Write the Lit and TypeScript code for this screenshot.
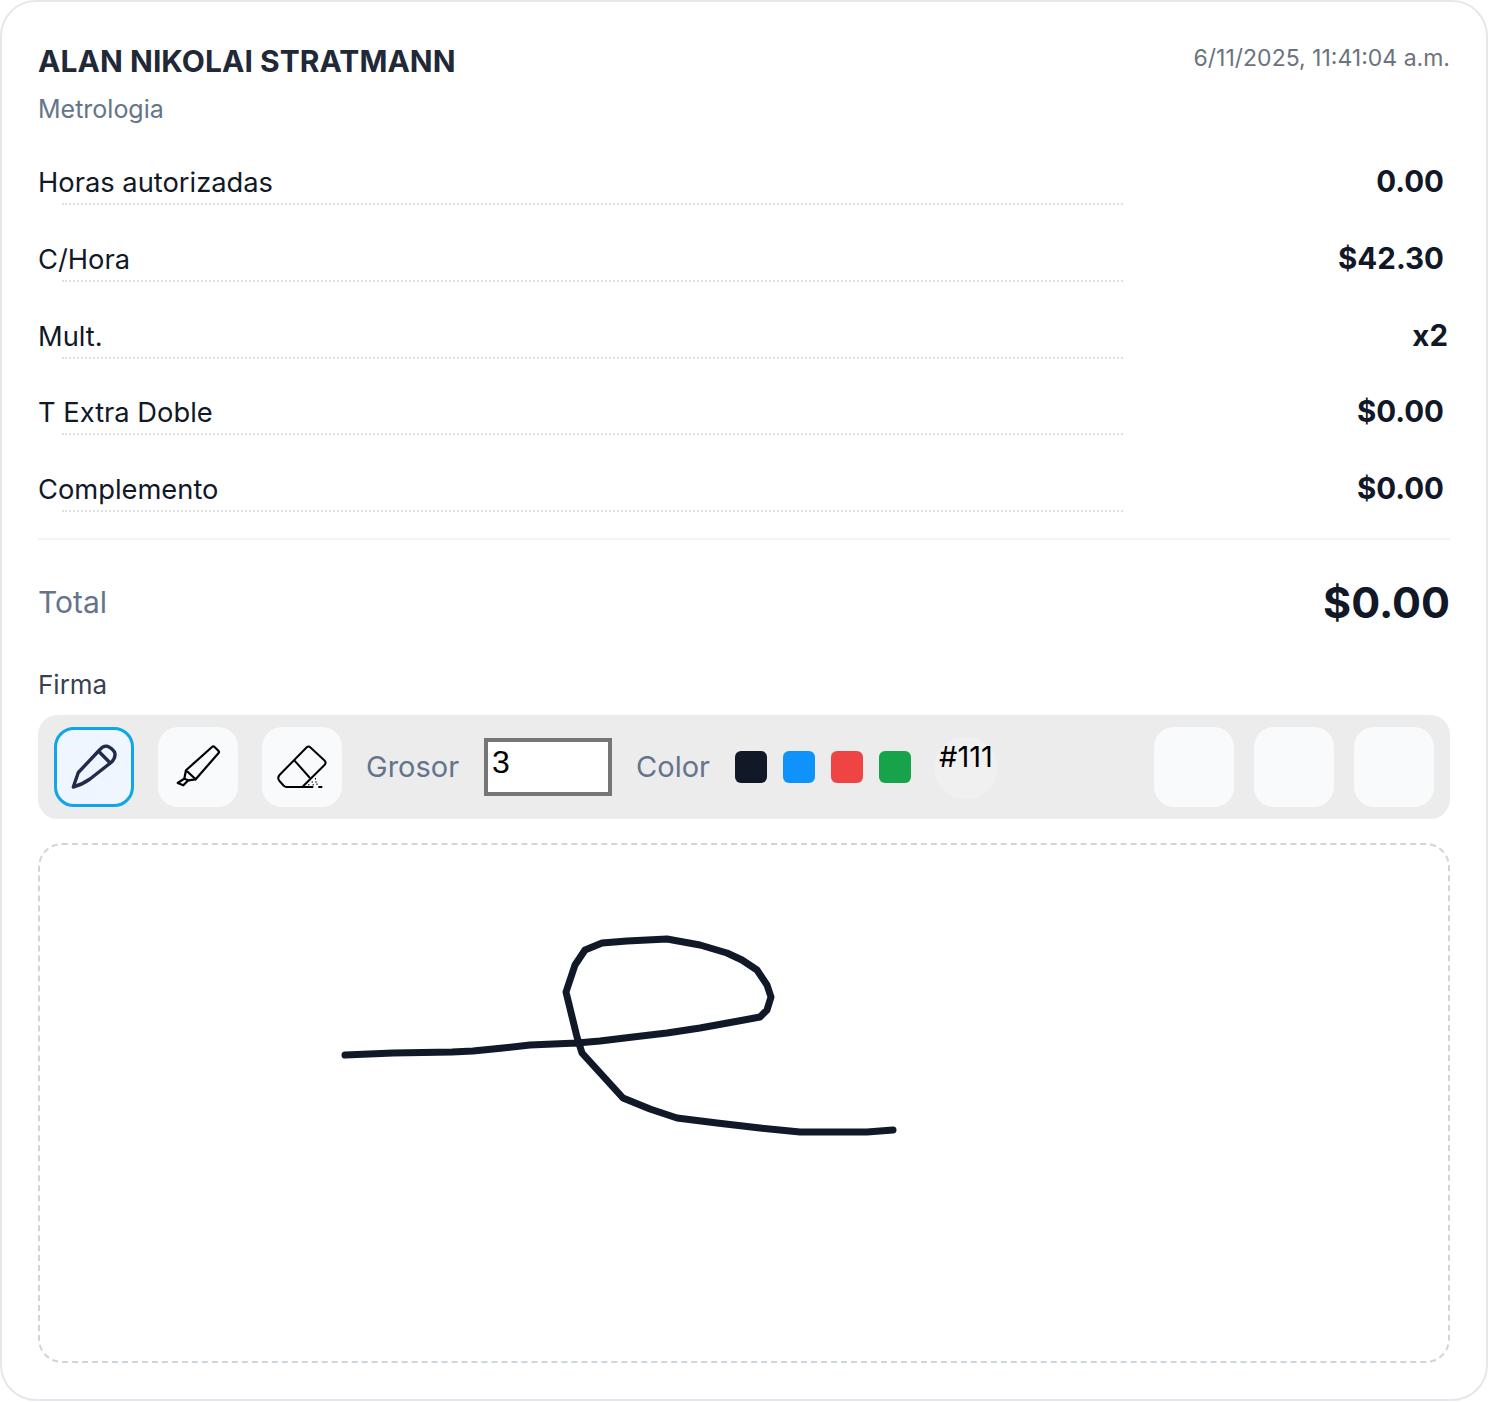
import { LitElement, html, css, svg } from "lit";
import { customElement } from "lit/decorators.js";

const rows = [
  { l: "Horas autorizadas", v: "0.00", c: "" },
  { l: "C/Hora", v: "$42.30", c: "" },
  { l: "Mult.", v: "x2", c: "wide" },
  { l: "T Extra Doble", v: "$0.00", c: "" },
  { l: "Complemento", v: "$0.00", c: "" },
];

const sig = "345,1055 393,1053 452,1052 473,1051 503,1048 530,1045 577,1043 600,1041 633,1037 667,1033 700,1028 733,1022 760,1017 767,1010 771,997 767,985 757,970 742,960 727,953 700,945 667,939 627,941 602,943 585,950 575,965 566,992 577,1037 582,1053 623,1098 650,1109 677,1118 717,1123 760,1128 800,1132 867,1132 893,1130";

@customElement("app-root")
export class AppRoot extends LitElement {
  static styles = css`
    :host { display: block; width: 1488px; height: 1402px; font-family: Inter, "Liberation Sans", sans-serif; }
    * { box-sizing: border-box; }
    .card { width: 1488px; height: 1401px; border: 2px solid #e5e7eb; border-radius: 36px; background: #fff; padding: 36px 36px 0; display: flex; flex-direction: column; }
    .head { display: flex; justify-content: space-between; align-items: flex-start; height: 116px; }
    .name { font-size: 30px; font-weight: 700; line-height: 46px; letter-spacing: 0.05px; color: #1f2937; }
    .dept { font-size: 25px; line-height: 36px; margin-top: 7px; color: #64748b; }
    .date { font-size: 23px; line-height: 40px; color: #6b7280; }
    .row { display: flex; justify-content: space-between; height: 76.8px; }
    .left { width: 1085px; padding-top: 11px; }
    .label { font-size: 27.3px; line-height: 35px; color: #111827; }
    .dots { margin: 3px 0 0 24px; border-bottom: 2px dotted #dcdfe4; }
    .val { font-size: 29.5px; font-weight: 700; line-height: 40px; padding-top: 7px; padding-right: 6px; color: #111827; }
    .val.wide { padding-right: 2px; }
    .sep { height: 2px; background: #f1f5f9; }
    .total { display: flex; justify-content: space-between; align-items: center; height: 124px; }
    .total-l { font-size: 30px; color: #64748b; }
    .total-v { font-size: 43px; font-weight: 700; color: #111827; }
    .firma { font-size: 26px; line-height: 34px; color: #374151; margin-top: 4px; }
    .bar { display: flex; align-items: flex-start; height: 104px; margin-top: 13px; padding: 12px 16px; background: #ececec; border-radius: 20px; }
    .btn { width: 80px; height: 80px; flex: none; border-radius: 20px; background: #f8fafc; display: flex; align-items: center; justify-content: center; margin-right: 24px; }
    .btn svg { width: 80px; height: 80px; flex: none; }
    .btn.on { border: 3px solid #0ea5e9; background: #eff6ff; }
    .txt { font-size: 29px; line-height: 80px; color: #64748b; }
    .num { width: 128px; height: 58px; margin: 11px 24px 0 25px; border: 4px solid #767676; background: #fff; padding: 0 4px 8px; font: 32px "Liberation Sans", sans-serif; color: #000; outline: none; border-radius: 0; }
    .swatches { display: flex; gap: 16px; margin: 24px 0 0 25px; }
    .sw { width: 32px; height: 32px; border-radius: 6px; }
    .pick { width: 64px; height: 62px; margin: 10px 0 0 23px; border-radius: 50%; background: #f0f0f0; font-size: 29px; line-height: 40px; color: #000; text-align: center; white-space: nowrap; }
    .end { margin-left: auto; display: flex; gap: 20px; }
    .end .btn { margin: 0; }
    .pad { height: 520px; margin-top: 24px; border: 2px dashed #cdd6dc; border-radius: 24px; }
    .pad svg { display: block; width: 100%; height: 100%; }
  `;

  render() {
    return html`
      <div class="card">
        <div class="head">
          <div>
            <div class="name">ALAN NIKOLAI STRATMANN</div>
            <div class="dept">Metrologia</div>
          </div>
          <div class="date">6/11/2025, 11:41:04 a.m.</div>
        </div>
        ${rows.map(r => html`
          <div class="row">
            <div class="left">
              <div class="label">${r.l}</div>
              <div class="dots"></div>
            </div>
            <div class="val ${r.c}">${r.v}</div>
          </div>`)}
        <div class="sep"></div>
        <div class="total"><div class="total-l">Total</div><div class="total-v">$0.00</div></div>
        <div class="firma">Firma</div>
        <div class="bar">
          <div class="btn on">
            <svg viewBox="0 0 80 80" fill="none" stroke="#222c4a" stroke-width="3.4" stroke-linejoin="round" stroke-linecap="round">
              ${svg`<path d="M19.3 60 L24.3 45.5 L46 22.5 C48 20 50.5 18.8 53 19.2 C56 20 60.5 23.5 61 26.7 C61.3 29.5 60 32.5 57.7 35 L36 52 C31 55.5 25 58.5 19.3 60 Z"/><path d="M44.6 24.3 L56 35.7"/>`}
            </svg>
          </div>
          <div class="btn">
            <svg viewBox="0 0 80 80" fill="none" stroke="#000" stroke-width="2.2" stroke-linejoin="round">
              ${svg`<path d="M54 20 Q55.3 18.6 56.6 20 L60.3 23.7 Q61.6 25 60.4 26.2 L37.7 52.3 L28 43.3 Z"/><path d="M28 43.3 L26.3 51.7 L30.3 53.3 L37.7 52.3"/><path d="M26.3 51.7 L19.7 56 L25.3 58.3 L30.3 53.3"/>`}
            </svg>
          </div>
          <div class="btn">
            <svg viewBox="0 0 80 80" fill="none" stroke="#000" stroke-width="2" stroke-linejoin="round">
              ${svg`<path d="M44.5 20.5 Q46.5 18.5 48.5 20.5 L62.5 33.5 Q64.7 35.7 62.5 38 L40.3 60 L24.5 60 Q23 60 21.5 58.5 L17.5 54 Q15 51 17.5 48 Z"/><path d="M32.3 33.3 L48 51"/><path d="M40.3 60 L51.3 60"/><path d="M56.3 60 L60.3 60"/><path d="M53 51.7 h1 M49.7 55 h1 M53.5 55 h1 M46.3 57.7 h1 M50.7 57.7 h1 M54.5 57.3 h1" stroke-width="1.5"/>`}
            </svg>
          </div>
          <div class="txt">Grosor</div>
          <input class="num" type="text" value="3" />
          <div class="txt">Color</div>
          <div class="swatches">
            ${["#111827", "#0f93fb", "#ef4444", "#16a34a"].map(c => html`<div class="sw" style="background:${c}"></div>`)}
          </div>
          <div class="pick">#111</div>
          <div class="end">
            <div class="btn"></div><div class="btn"></div><div class="btn"></div>
          </div>
        </div>
        <div class="pad">
          <svg viewBox="40 845 1408 516" fill="none">
            ${svg`<polyline points="${sig}" stroke="#111827" stroke-width="7" stroke-linejoin="round" stroke-linecap="round"/>`}
          </svg>
        </div>
      </div>
    `;
  }
}
